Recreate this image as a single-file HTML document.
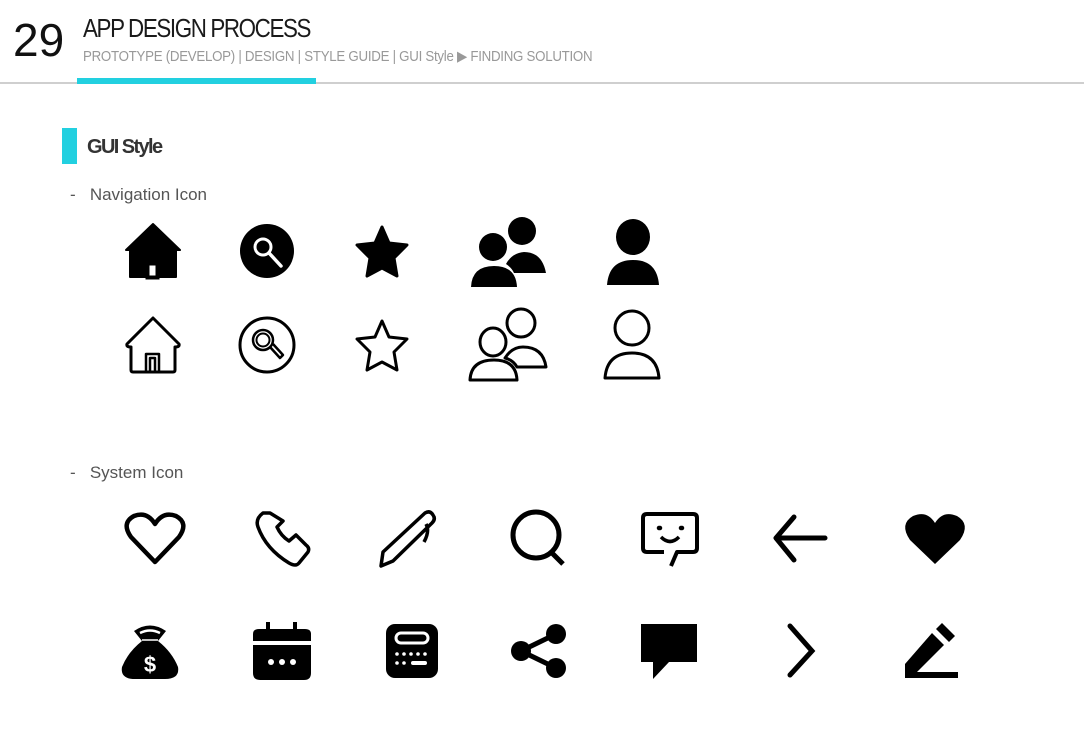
<!DOCTYPE html>
<html><head><meta charset="utf-8"><style>
body{margin:0;width:1084px;height:750px;background:#fff;position:relative;overflow:hidden;font-family:"Liberation Sans",sans-serif}
.a{position:absolute;white-space:nowrap}
</style></head><body>
<div class="a" style="left:13px;top:14px;font-size:46px;color:#111;line-height:52px">29</div>
<div class="a" style="left:83px;top:13px;font-size:26px;color:#1a1a1a;letter-spacing:-1.6px;line-height:30px;transform:scaleX(0.86);transform-origin:left">APP DESIGN PROCESS</div>
<div class="a" style="left:83px;top:48px;font-size:14.5px;color:#999;line-height:18px;letter-spacing:-0.3px;transform:scaleX(0.917);transform-origin:left">PROTOTYPE (DEVELOP) | DESIGN | STYLE GUIDE | GUI Style ▶ FINDING SOLUTION</div>
<div class="a" style="left:0;top:82px;width:1084px;height:2px;background:#cfcfcf"></div>
<div class="a" style="left:77px;top:78px;width:239px;height:6px;background:#22d0e0"></div>
<div class="a" style="left:62px;top:128px;width:15px;height:36px;background:#22d0e0"></div>
<div class="a" style="left:87px;top:134px;font-size:20px;font-weight:bold;color:#333;letter-spacing:-1.6px;line-height:26px">GUI Style</div>
<div class="a" style="left:70px;top:185px;font-size:17px;color:#555;line-height:20px">-&nbsp;&nbsp;&nbsp;Navigation Icon</div>
<div class="a" style="left:70px;top:463px;font-size:17px;color:#555;line-height:20px">-&nbsp;&nbsp;&nbsp;System Icon</div>
<svg class="a" style="left:0;top:0" width="1084" height="750" viewBox="0 0 1084 750">
<path d="M153 224 L180 250 L176 250 L176 277 L130 277 L130 250 L126 250 Z" fill="#000" stroke="#000" stroke-width="2" stroke-linejoin="round"/>
<rect x="147.5" y="263.5" width="10" height="14" fill="#fff" stroke="#000" stroke-width="4"/>
<circle cx="267" cy="251" r="27"/>
<circle cx="263" cy="247" r="8" fill="none" stroke="#fff" stroke-width="3"/>
<line x1="269" y1="253" x2="281" y2="266" stroke="#fff" stroke-width="3.5" stroke-linecap="round"/>
<path d="M382 227 L389 243 L407 245 L394 258 L397 276 L382 268 L367 276 L370 258 L357 245 L375 243 Z" fill="#000" stroke="#000" stroke-width="3" stroke-linejoin="round"/>
<ellipse cx="522" cy="231" rx="14" ry="14"/>
<path d="M506 264 Q512 253 524 252 Q542 252 546 273 L514 273 Q512 268 506 264Z"/>
<ellipse cx="493" cy="247" rx="14" ry="14"/>
<path d="M471 287 Q472 266 494 266 Q516 266 517 287 Z"/>
<ellipse cx="633" cy="237" rx="17" ry="18"/>
<path d="M607 285 Q609 260 633 260 Q657 260 659 285 Z"/>
<g fill="none" stroke="#000" stroke-width="3" stroke-linejoin="round">
<path d="M153 318 L179 344 Q180 347 175 347 L175 370 Q175 372 173 372 L133 372 Q131 372 131 370 L131 347 Q126 347 127 344 Z"/>
<path d="M146 372 L146 354 L159 354 L159 372 M150 372 L150 358 L155 358 L155 372" stroke-width="2.5"/>
<circle cx="267" cy="345" r="27"/>
<circle cx="263" cy="340" r="10" stroke-width="2.5"/>
<circle cx="263" cy="340" r="6.5" stroke-width="2"/>
<path d="M270 347 L280 358 L283 355 L273 344" stroke-width="2.5"/>
<path d="M382 321 L389 337 L407 339 L394 352 L397 370 L382 362 L367 370 L370 352 L357 339 L375 337 Z"/>
<ellipse cx="521" cy="323" rx="14" ry="14"/>
<path d="M505 358 Q512 347 523 347 Q543 347 546 367 L517 367 Q513 360 505 358Z"/>
<ellipse cx="493" cy="342" rx="13" ry="14"/>
<path d="M470 380 Q471 360 494 360 Q516 360 517 380 Z"/>
<ellipse cx="632" cy="328" rx="17" ry="17"/>
<path d="M605 378 Q607 353 632 353 Q657 353 659 378 Z"/>
<path d="M155 562 L131 537 Q121 523 134 516 Q147 511 155 524 Q163 511 176 516 Q189 523 179 537 Z" stroke-width="4.5"/>
<path d="M263 513 Q255 519 258 527 Q266 549 289 563 Q296 567 299 563 L308 552 Q310 548 306 545 L296 535 L289 541 Q281 536 277 527 L283 521 L270 513 Z" stroke-width="3.5"/>
<path d="M383 552 L425 513 Q430 510 433 515 Q436 519 432 523 L393 561 L381 566 Z M426 524 Q430 531 424 542" stroke-width="3.5"/>
<circle cx="536" cy="535" r="23" stroke-width="5"/>
<line x1="552" y1="553" x2="563" y2="564" stroke-width="5"/>
<path d="M643 548 L643 518 Q643 514 647 514 L693 514 Q697 514 697 518 L697 548 Q697 552 693 552 L677 552 L671 566 M664 552 L647 552 Q643 552 643 548" stroke-width="4"/>
<path d="M659 528 h1 M681 528 h1" stroke-width="4.5" stroke-linecap="round"/>
<path d="M661 537 Q670 546 679 537" stroke-width="3.5"/>
<path d="M794 517 L776 538 L794 560 M776 538 L825 538" stroke-width="5" stroke-linecap="round"/>
</g>
<path d="M935 564 L910 540 Q899 524 913 516 Q927 510 935 523 Q943 510 957 516 Q971 524 960 540 Z"/>
<path d="M134 631 Q150 620 166 631 L158 641 Q172 652 178 667 Q180 679 165 679 L135 679 Q120 679 122 667 Q128 652 142 641 Z"/>
<path d="M140 633 Q150 628 160 633" stroke="#fff" stroke-width="2.5" fill="none"/>
<path d="M142 640 L158 640" stroke="#fff" stroke-width="1.5"/>
<text x="150" y="672" font-family="Liberation Sans" font-weight="bold" font-size="22" fill="#fff" text-anchor="middle">$</text>
<path d="M253 634 Q253 629 259 629 L305 629 Q311 629 311 634 L311 641 L253 641 Z"/>
<rect x="266" y="622" width="4" height="8"/><rect x="293" y="622" width="4" height="8"/>
<path d="M253 645 L311 645 L311 673 Q311 680 304 680 L260 680 Q253 680 253 673 Z"/>
<circle cx="271" cy="662" r="3" fill="#fff"/><circle cx="282" cy="662" r="3" fill="#fff"/><circle cx="293" cy="662" r="3" fill="#fff"/>
<rect x="386" y="624" width="52" height="54" rx="9"/>
<rect x="396" y="633" width="32" height="10" rx="5" fill="none" stroke="#fff" stroke-width="3"/>
<g fill="#fff"><circle cx="397" cy="654" r="1.8"/><circle cx="404" cy="654" r="1.8"/><circle cx="411" cy="654" r="1.8"/><circle cx="418" cy="654" r="1.8"/><circle cx="425" cy="654" r="1.8"/>
<circle cx="397" cy="663" r="1.8"/><circle cx="404" cy="663" r="1.8"/><rect x="411" y="661" width="16" height="4" rx="2"/></g>
<circle cx="556" cy="634" r="10"/><circle cx="521" cy="651" r="10"/><circle cx="556" cy="668" r="10"/>
<path d="M521 651 L556 634 M521 651 L556 668" stroke="#000" stroke-width="5"/>
<path d="M641 624 L697 624 L697 662 L669 662 L653 679 L653 662 L641 662 Z"/>
<path d="M790 626 L812 651 L790 675" fill="none" stroke="#000" stroke-width="5" stroke-linecap="round"/>
<path d="M905 664 L932 633 L944 645 L917 672 L958 672 L958 678 L905 678 Z"/>
<path d="M936 629 L942 623 L955 636 L949 642 Z"/>
</svg>
</body></html>
